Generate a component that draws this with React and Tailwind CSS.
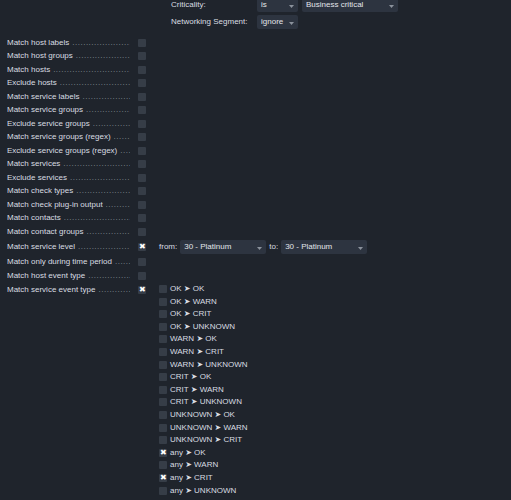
import React from 'react';

const leftRows = [
  'Match host labels',
  'Match host groups',
  'Match hosts',
  'Exclude hosts',
  'Match service labels',
  'Match service groups',
  'Exclude service groups',
  'Match service groups (regex)',
  'Exclude service groups (regex)',
  'Match services',
  'Exclude services',
  'Match check types',
  'Match check plug-in output',
  'Match contacts',
  'Match contact groups',
];

const events = [
  ['OK', 'OK'], ['OK', 'WARN'], ['OK', 'CRIT'], ['OK', 'UNKNOWN'],
  ['WARN', 'OK'], ['WARN', 'CRIT'], ['WARN', 'UNKNOWN'],
  ['CRIT', 'OK'], ['CRIT', 'WARN'], ['CRIT', 'UNKNOWN'],
  ['UNKNOWN', 'OK'], ['UNKNOWN', 'WARN'], ['UNKNOWN', 'CRIT'],
  ['any', 'OK', true], ['any', 'WARN'], ['any', 'CRIT', true], ['any', 'UNKNOWN'],
];

function Box({ checked }) {
  return (
    <span className="flex h-[8px] w-[8px] shrink-0 items-center justify-center rounded-[1px] bg-[#363d47] text-[8px] leading-none text-white">
      {checked ? '✖' : ''}
    </span>
  );
}

function Select({ value, width }) {
  return (
    <div
      className={`flex h-[14px] items-center justify-between rounded-[2px] bg-[#2d3440] pl-[4px] pr-[4px] text-[8px] text-[#e2e5ea] ${width}`}
    >
      <span>{value}</span>
      <svg width="5" height="3" viewBox="0 0 5 3" className="mt-[2px]">
        <path d="M0 0 L5 0 L2.5 3 Z" fill="#8b929c" />
      </svg>
    </div>
  );
}

function Label({ text, checked }) {
  return (
    <div className="flex items-center pl-[7px]">
      <div className="flex w-[123px] items-center overflow-hidden whitespace-nowrap">
        <span className="shrink-0 pr-[3px]">{text}</span>
        <span className="overflow-hidden text-[#8d939b] tracking-[0.5px]">
          {'.'.repeat(80)}
        </span>
      </div>
      <div className="ml-[8px]">
        <Box checked={checked} />
      </div>
    </div>
  );
}

export default function App() {
  return (
    <div
      className="h-[500px] w-[511px] overflow-hidden bg-[#1f242c] text-[8px] leading-none text-[#d9dde2]"
      style={{ fontFamily: '"Liberation Sans", Arial, sans-serif' }}
    >
      {/* Top attributes */}
      <div className="ml-[171px] mt-[-2px] flex flex-col gap-[3px]">
        <div className="flex items-center">
          <span className="w-[86px]">Criticality:</span>
          <Select value="is" width="w-[41px]" />
          <div className="ml-[4px]">
            <Select value="Business critical" width="w-[96px]" />
          </div>
        </div>
        <div className="flex items-center">
          <span className="w-[86px]">Networking Segment:</span>
          <Select value="ignore" width="w-[41px]" />
        </div>
      </div>

      {/* Conditions */}
      <div className="mt-[7px] flex flex-col">
        {leftRows.map((r) => (
          <div key={r} className="flex h-[13.53px] items-center">
            <Label text={r} />
          </div>
        ))}

        <div className="flex h-[17px] items-center">
          <Label text="Match service level" checked />
          <div className="ml-[13px] flex items-center">
            <span className="mr-[3px]">from:</span>
            <Select value="30 - Platinum" width="w-[86px]" />
            <span className="ml-[3px] mr-[3px]">to:</span>
            <Select value="30 - Platinum" width="w-[86px]" />
          </div>
        </div>

        <div className="flex h-[13.53px] items-center">
          <Label text="Match only during time period" />
        </div>
        <div className="flex h-[13.53px] items-center">
          <Label text="Match host event type" />
        </div>

        <div className="flex items-start">
          <div className="flex h-[13.53px] items-center">
            <Label text="Match service event type" checked />
          </div>
          <div className="ml-[13px] flex flex-col">
            {events.map(([a, b, c]) => (
              <div key={a + b} className="flex h-[12.6px] items-center gap-[3px]">
                <Box checked={c} />
                <span className="whitespace-nowrap">
                  {a} <span style={{ fontFamily: '"DejaVu Sans", sans-serif' }} className="text-[8px]">➤</span> {b}
                </span>
              </div>
            ))}
          </div>
        </div>
      </div>
    </div>
  );
}
